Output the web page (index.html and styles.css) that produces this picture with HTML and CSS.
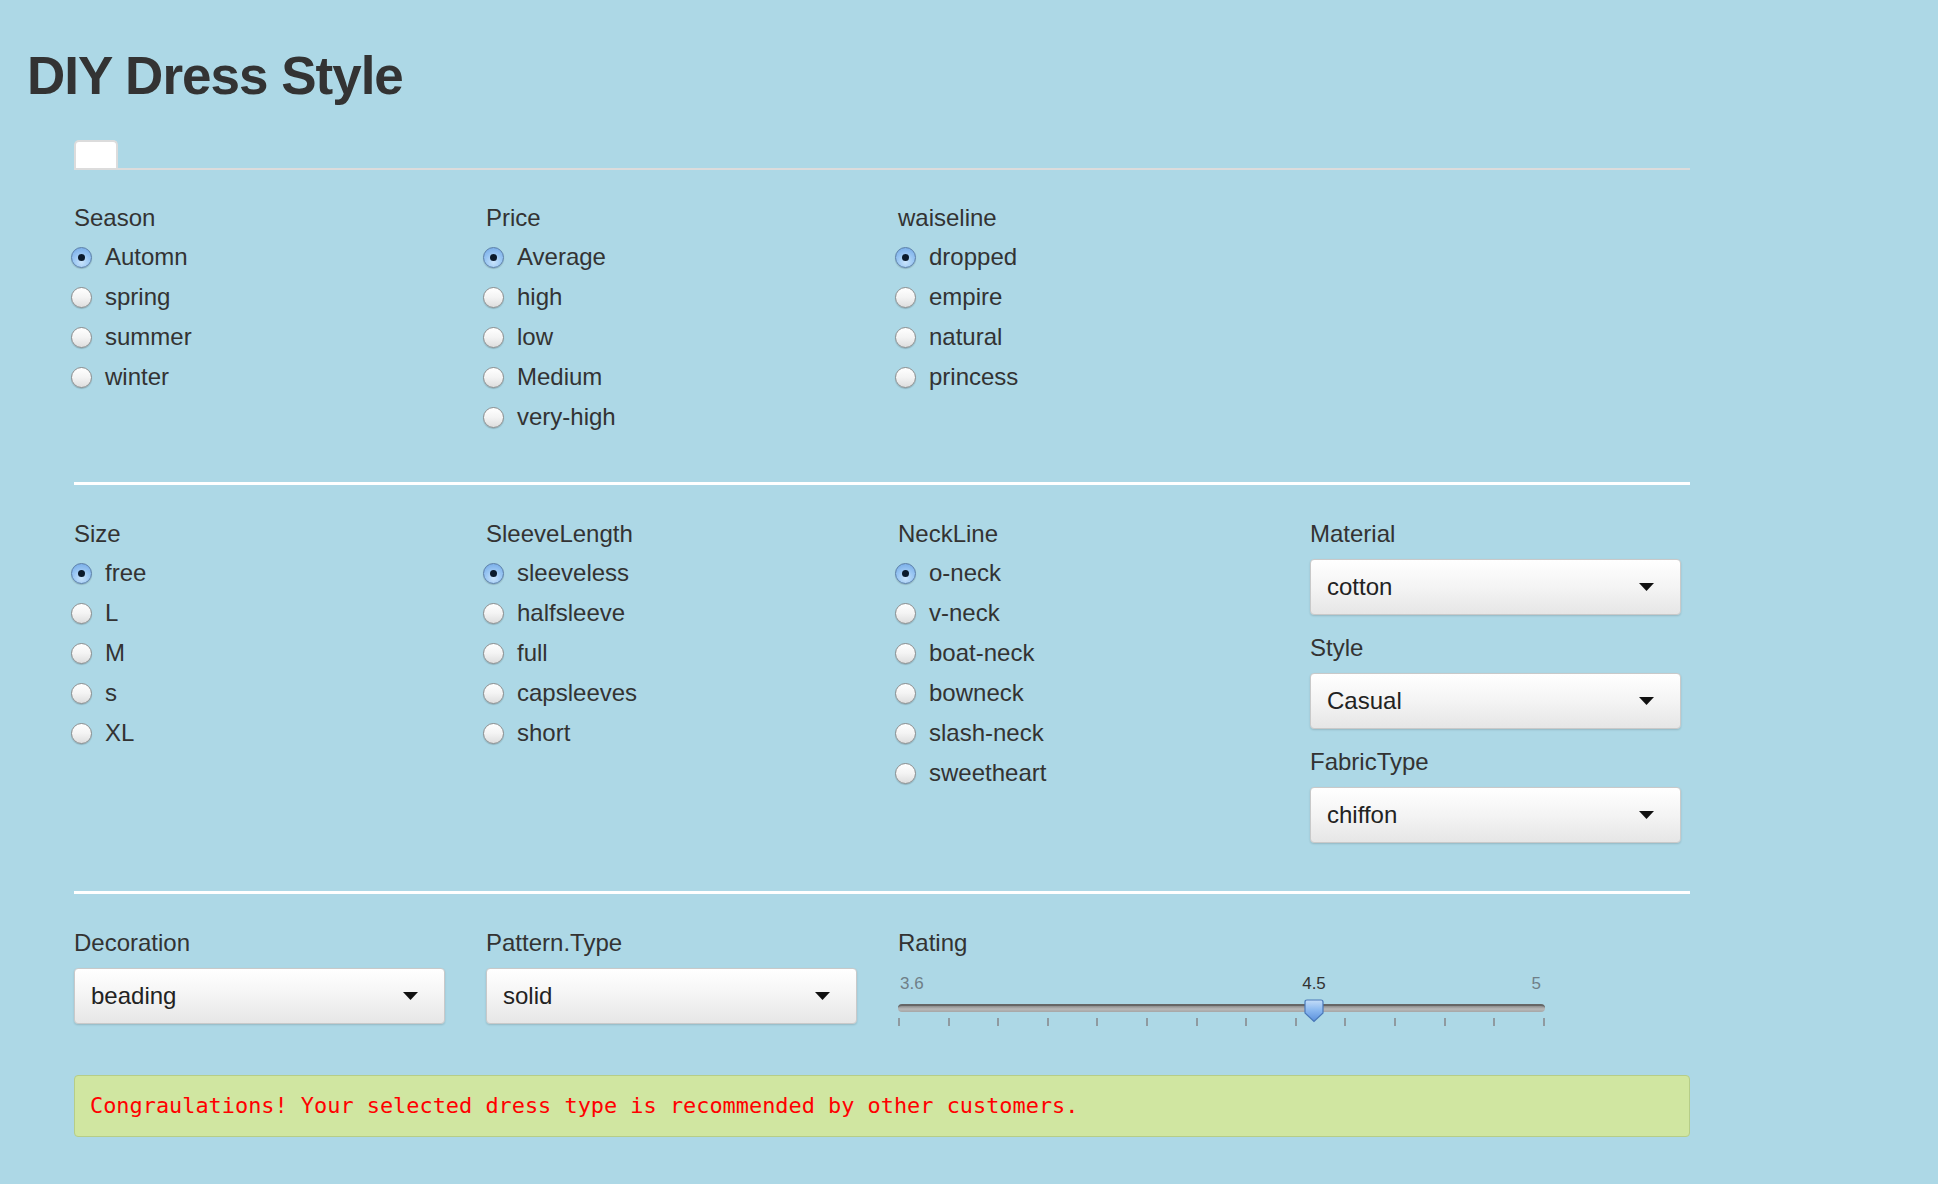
FILE: index.html
```html
<!DOCTYPE html>
<html>
<head>
<meta charset="utf-8">
<title>DIY Dress Style</title>
<link rel="stylesheet" href="styles.css">
</head>
<body>
<div class="page">
  <h1 class="title">DIY Dress Style</h1>
  <div class="main">
    <div class="tabs"><div class="tab"></div></div>

    <div class="grid sec1">
      <div class="col">
        <div class="lbl">Season</div>
        <div class="opt"><span class="radio on"></span>Automn</div>
        <div class="opt"><span class="radio"></span>spring</div>
        <div class="opt"><span class="radio"></span>summer</div>
        <div class="opt"><span class="radio"></span>winter</div>
      </div>
      <div class="col">
        <div class="lbl">Price</div>
        <div class="opt"><span class="radio on"></span>Average</div>
        <div class="opt"><span class="radio"></span>high</div>
        <div class="opt"><span class="radio"></span>low</div>
        <div class="opt"><span class="radio"></span>Medium</div>
        <div class="opt"><span class="radio"></span>very-high</div>
      </div>
      <div class="col">
        <div class="lbl">waiseline</div>
        <div class="opt"><span class="radio on"></span>dropped</div>
        <div class="opt"><span class="radio"></span>empire</div>
        <div class="opt"><span class="radio"></span>natural</div>
        <div class="opt"><span class="radio"></span>princess</div>
      </div>
    </div>

    <div class="rule rule1"></div>

    <div class="grid sec2">
      <div class="col">
        <div class="lbl">Size</div>
        <div class="opt"><span class="radio on"></span>free</div>
        <div class="opt"><span class="radio"></span>L</div>
        <div class="opt"><span class="radio"></span>M</div>
        <div class="opt"><span class="radio"></span>s</div>
        <div class="opt"><span class="radio"></span>XL</div>
      </div>
      <div class="col">
        <div class="lbl">SleeveLength</div>
        <div class="opt"><span class="radio on"></span>sleeveless</div>
        <div class="opt"><span class="radio"></span>halfsleeve</div>
        <div class="opt"><span class="radio"></span>full</div>
        <div class="opt"><span class="radio"></span>capsleeves</div>
        <div class="opt"><span class="radio"></span>short</div>
      </div>
      <div class="col">
        <div class="lbl">NeckLine</div>
        <div class="opt"><span class="radio on"></span>o-neck</div>
        <div class="opt"><span class="radio"></span>v-neck</div>
        <div class="opt"><span class="radio"></span>boat-neck</div>
        <div class="opt"><span class="radio"></span>bowneck</div>
        <div class="opt"><span class="radio"></span>slash-neck</div>
        <div class="opt"><span class="radio"></span>sweetheart</div>
      </div>
      <div class="col">
        <div class="field">
          <div class="lbl">Material</div>
          <div class="select"><span>cotton</span><svg class="caret" width="15" height="8" viewBox="0 0 15 8"><polygon points="0,0 15,0 7.5,8" fill="#111"/></svg></div>
        </div>
        <div class="field">
          <div class="lbl">Style</div>
          <div class="select"><span>Casual</span><svg class="caret" width="15" height="8" viewBox="0 0 15 8"><polygon points="0,0 15,0 7.5,8" fill="#111"/></svg></div>
        </div>
        <div class="field">
          <div class="lbl">FabricType</div>
          <div class="select"><span>chiffon</span><svg class="caret" width="15" height="8" viewBox="0 0 15 8"><polygon points="0,0 15,0 7.5,8" fill="#111"/></svg></div>
        </div>
      </div>
    </div>

    <div class="rule rule2"></div>

    <div class="grid sec3">
      <div class="col">
        <div class="field">
          <div class="lbl">Decoration</div>
          <div class="select"><span>beading</span><svg class="caret" width="15" height="8" viewBox="0 0 15 8"><polygon points="0,0 15,0 7.5,8" fill="#111"/></svg></div>
        </div>
      </div>
      <div class="col">
        <div class="field">
          <div class="lbl">Pattern.Type</div>
          <div class="select"><span>solid</span><svg class="caret" width="15" height="8" viewBox="0 0 15 8"><polygon points="0,0 15,0 7.5,8" fill="#111"/></svg></div>
        </div>
      </div>
      <div class="col wide">
        <div class="lbl">Rating</div>
        <div class="slider">
          <div class="nums"><span>3.6</span><span>5</span></div>
          <div class="track"></div>
          <div class="ticks">
            <i></i><i></i><i></i><i></i><i></i><i></i><i></i><i></i><i></i><i></i><i></i><i></i><i></i><i></i>
          </div>
          <span class="val" style="left: 64.3%">4.5</span>
          <svg class="thumb" style="left: 64.3%" width="20" height="24" viewBox="0 0 20 24">
            <defs>
              <linearGradient id="tg" x1="0" y1="0" x2="0" y2="1">
                <stop offset="0" stop-color="#c4ddf8"/>
                <stop offset="0.45" stop-color="#8dbaf0"/>
                <stop offset="1" stop-color="#5a8fdc"/>
              </linearGradient>
            </defs>
            <path d="M3 1 H17 Q19 1 19 3 V14 L10 22.5 L1 14 V3 Q1 1 3 1 Z" fill="url(#tg)" stroke="#4a78b8" stroke-width="1.2"/>
          </svg>
        </div>
      </div>
    </div>

    <div class="alert">Congraulations! Your selected dress type is recommended by other customers.</div>
  </div>
</div>
</body>
</html>
```

FILE: styles.css
```css
html, body {
  margin: 0;
  padding: 0;
}
body {
  background: #add8e6;
  font-family: "Liberation Sans", Arial, Helvetica, sans-serif;
  color: #333;
  min-height: 1184px;
}
.page {
  padding-left: 27px;
}
.title {
  margin: 47px 0 0 0;
  font-size: 53px;
  line-height: 58px;
  font-weight: bold;
  letter-spacing: -1px;
  color: #333;
}
.main {
  margin-left: 47px;
  width: 1616px;
}
.tabs {
  margin-top: 35px;
  display: flex;
  border-bottom: 2px solid #dcdcdc;
}
.tab {
  width: 44px;
  height: 28px;
  box-sizing: border-box;
  background: #fff;
  border: 2px solid #dcdcdc;
  border-bottom: none;
  border-radius: 5px 5px 0 0;
}
.grid {
  display: grid;
  grid-template-columns: repeat(4, 379px);
  column-gap: 33px;
  align-items: start;
}
.sec1 { padding-top: 33px; }
.sec2 { padding-top: 34px; }
.sec3 { padding-top: 34px; }
.wide { grid-column: span 2; }
.lbl {
  font-size: 24px;
  line-height: 29px;
  height: 29px;
  margin-bottom: 5px;
}
.field .lbl {
  margin-bottom: 11px;
}
.field + .field {
  margin-top: 18px;
}
.opt {
  display: flex;
  align-items: center;
  height: 40px;
  font-size: 24px;
  line-height: 40px;
}
.radio {
  display: inline-block;
  width: 21px;
  height: 21px;
  box-sizing: border-box;
  border-radius: 50%;
  border: 1px solid #8e8e8e;
  background: linear-gradient(#ffffff, #f3f3f3 50%, #dedede);
  box-shadow: 0 1px 1px rgba(0,0,0,0.18);
  margin-left: -3px;
  margin-right: 13px;
  position: relative;
  flex: none;
}
.radio.on {
  border-color: #5b7ea8;
  background: radial-gradient(circle at 50% 75%, #c8e3fb 0, #9cc8f3 45%, #6fa6e6 100%);
}
.radio.on::after {
  content: "";
  position: absolute;
  left: 50%;
  top: 50%;
  width: 7px;
  height: 7px;
  margin: -3.5px 0 0 -3.5px;
  border-radius: 50%;
  background: #0b1a2c;
}
.rule {
  height: 3px;
  background: #fff;
}
.rule1 { margin-top: 45px; }
.rule2 { margin-top: 48px; }
.select {
  width: 371px;
  height: 56px;
  box-sizing: border-box;
  border: 1px solid #c9c9c9;
  border-radius: 4px;
  background: linear-gradient(#ffffff, #f4f4f4 50%, #e6e6e6);
  box-shadow: 0 1px 2px rgba(0,0,0,0.15);
  display: flex;
  align-items: center;
  justify-content: space-between;
  padding: 0 26px 0 16px;
  font-size: 24px;
  color: #222;
}
.caret {
  display: block;
}
.slider {
  position: relative;
  width: 647px;
  padding-top: 12px;
}
.nums {
  display: flex;
  justify-content: space-between;
  font-size: 17px;
  line-height: 20px;
  height: 20px;
  color: #6f7f88;
  padding: 0 4px 0 2px;
}
.track {
  margin-top: 10px;
  height: 8px;
  box-sizing: border-box;
  border-radius: 4px;
  border-top: 2px solid #666;
  background: linear-gradient(#8d8d8d, #b8b8b8 50%, #a6a6a6);
}
.ticks {
  margin-top: 6px;
  display: flex;
  justify-content: space-between;
  height: 8px;
}
.ticks i {
  display: block;
  width: 2px;
  height: 8px;
  background: #8f9aa0;
}
.val {
  position: absolute;
  top: 12px;
  transform: translateX(-50%);
  font-size: 17px;
  line-height: 20px;
  color: #333;
}
.thumb {
  position: absolute;
  top: 37px;
  margin-left: -10px;
}
.alert {
  margin-top: 49px;
  height: 62px;
  box-sizing: border-box;
  background: #d0e6a1;
  border: 1px solid #b6cd88;
  border-radius: 4px;
  padding-left: 15px;
  font-family: "DejaVu Sans Mono", "Liberation Mono", monospace;
  font-size: 21.9px;
  line-height: 60px;
  color: #ff0000;
}
```
